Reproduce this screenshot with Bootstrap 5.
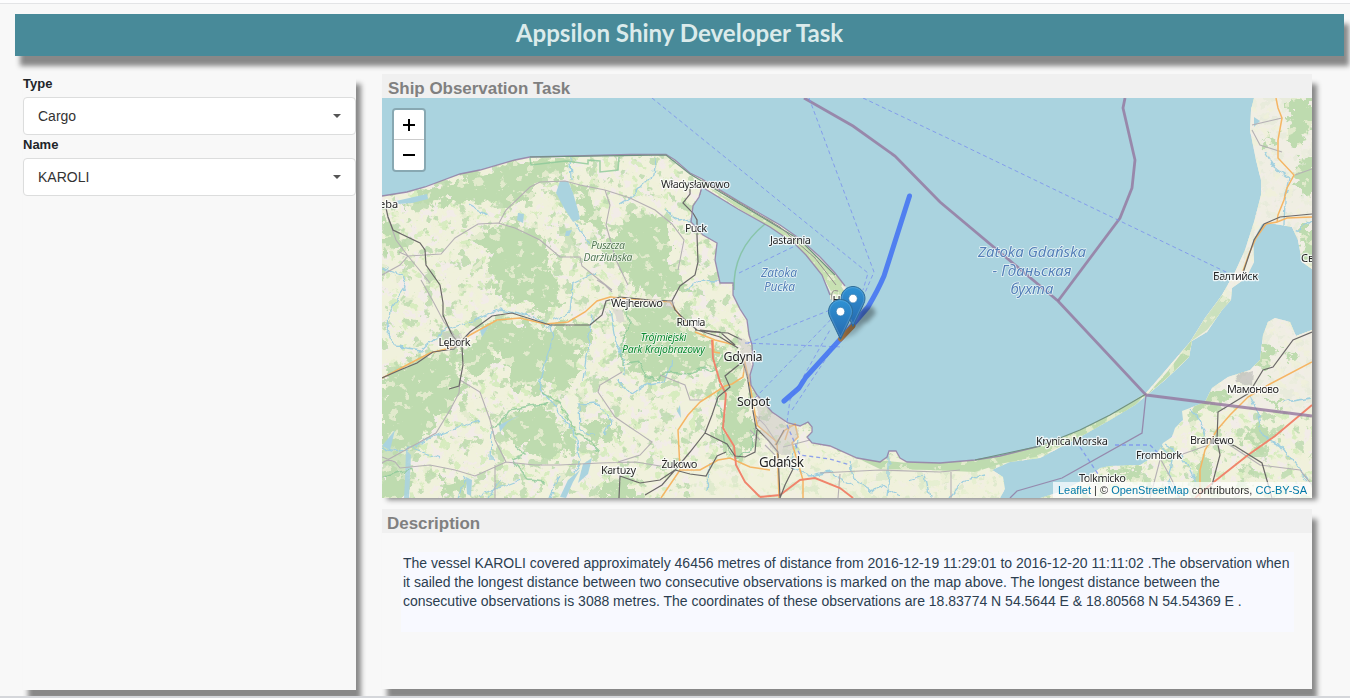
<!DOCTYPE html>
<html lang="en">
<head>
<meta charset="utf-8">
<title>Appsilon Shiny Developer Task</title>
<meta name="viewport" content="width=device-width, initial-scale=1">
<link rel="stylesheet" href="https://cdn.jsdelivr.net/npm/bootstrap@5.3.0/dist/css/bootstrap.min.css">
<style>
  body { background:#f8f8f8; font-family:"Liberation Sans",Arial,sans-serif; font-size:14px; height:698px; color:#212529; }
  .top-edge { height:4px; background:#fdfdfe; border-bottom:1px solid #e3e4e6; }
  .bottom-edge { height:2px; background:#d5d7db; z-index:5; }
  .raised { box-shadow:5px 10px 5px #888; }
  .title-bar { margin:10px 6px 0 15px; height:42px; background:#488a99; color:#dbebeb; }
  .title-bar h1 { font:700 24.1px/37px Lato,sans-serif; }
  .content-row { margin:18px 0 0 23px; gap:26px; }
  .side-panel { width:333px; height:616px; background:#f8f8f8; }
  .side-panel label { font-size:13px; line-height:20px; font-weight:700; height:23px; }
  .side-panel .form-select { height:38px; border-color:#dcdddd; border-radius:4px; padding:1px 14px 0; font-size:14px; color:#333; background-image:none; }
  .caret-mark { right:15px; top:17px; border:4px solid transparent; border-top-color:#555; border-bottom:0; }
  .right-col { width:930px; }
  .map-card { height:416px; }
  .desc-card { height:180px; margin-top:19px; background:#f8f8f8; }
  .card-title-bar { height:24px; background:#f0f0f0; color:#808080; font-weight:700; font-size:16.95px; line-height:29px; padding-left:6px; }
  .desc-card .card-title-bar { padding-left:5px; }
  .map-box { height:400px; }
  .desc-text { margin:19px 18px 0 19px; height:80px; padding:2px 2px 2px 2px; background:#f8f9ff; color:#2c3e50; font-size:14px; line-height:19px; }
  .zoom-box { left:10px; top:10px; border:2px solid rgba(0,0,0,.2); border-radius:4px; background-clip:padding-box; width:34px; }
  .zoom-box .btn { height:30px; padding:0; border:0; border-radius:2px; background:#fff; }
  .zoom-box .btn + .btn { border-top:1px solid #ccc; height:31px; border-radius:0 0 2px 2px; }
  .attribution { height:16px; background:rgba(255,255,255,.7); font-size:11px; line-height:16px; padding:0 5px; color:#333; white-space:nowrap; }
  .attribution a { color:#0078a8; }
  .lbl { font-family:"Noto Sans",sans-serif; font-size:11px; fill:#262626; text-anchor:middle; paint-order:stroke; stroke:rgba(255,255,255,.75); stroke-width:2.5px; stroke-linejoin:round; }
  .lbl-it { font-style:italic; stroke-width:1.5px; }
  .sea { fill:#5480b8; }
</style>
</head>
<body class="overflow-hidden position-relative">
<div class="top-edge"></div>
<header class="title-bar raised text-center"><h1 class="m-0">Appsilon Shiny Developer Task</h1></header>

<main class="content-row d-flex align-items-start">
  <aside class="side-panel raised d-flex flex-column">
    <label for="type">Type</label>
    <div class="position-relative"><div id="type" class="form-select bg-white d-flex align-items-center">Cargo</div><span class="caret-mark position-absolute"></span></div>
    <label for="name">Name</label>
    <div class="position-relative"><div id="name" class="form-select bg-white d-flex align-items-center">KAROLI</div><span class="caret-mark position-absolute"></span></div>
  </aside>

  <div class="right-col">
    <section class="map-card raised">
      <div class="card-title-bar">Ship Observation Task</div>
      <div class="map-box position-relative">
<svg class="d-block" width="930" height="400" viewBox="382 98 930 400">
<defs>
  <path id="westland" d="M382 196L407 192 425 187 460 174 480 170 515 160 530 157 575 156 630 154.5 666 154.5 675 160 690 173 702 179 740 202 780 225 800 239 820 257 835 273 845 286 849 298 840 303 830 299 830 292 822 275 806 255 795 244 770 227 738 209 702 187 699 197 693 206 691 222 703 235 717 243 715 260 720 283 733 283 733 295 740 309 747 320 749 335 752 345 753 365 750 375 751 385 757 395 772 412 788 423 800 426 808 423 812 427 812 432 807 437 812 443 830 446 857 458 880 462 887 457 889 451 896 451 900 458 907 462 940 463 975 460 1000 456 1040 446 1080 430 1110 415 1146 393 1190 342 1205 318 1222 295 1235 272 1245 250 1254 222 1261 195 1261 180 1256 160 1250 130 1251 110 1254 98 1312 98 1312 269 1302 262 1298 240 1292 227 1275 224 1262 224 1253 240 1254 262 1246 278 1232 288 1231 300 1222 310 1207 332 1192 341 1189 357 1178 368 1165 380 1146 396 1135 405 1110 420 1080 437 1040 458 1010 462 992 470 1003 477 1005 489 1000 498 382 498Z"/>
  <path id="eastland" d="M1040 498L1060 492 1085 479 1100 468 1110 466 1140 465 1150 459 1158 452 1163 443 1172 437 1175 428 1183 420 1182 411 1190 408 1205 402 1212 388 1228 377 1250 370 1260 360 1263 335 1268 322 1275 318 1290 322 1296 336 1312 330 1312 498Z"/>
  <clipPath id="landclip"><use href="#westland"/><use href="#eastland"/></clipPath>
  <filter id="rough" x="-5%" y="-5%" width="110%" height="110%"><feTurbulence type="fractalNoise" baseFrequency=".09" numOctaves="4" seed="4"/><feDisplacementMap in="SourceGraphic" scale="26" xChannelSelector="R" yChannelSelector="G"/></filter>
  <filter id="wiggle" x="-5%" y="-5%" width="110%" height="110%"><feTurbulence type="fractalNoise" baseFrequency=".12" numOctaves="2" seed="9"/><feDisplacementMap in="SourceGraphic" scale="7" xChannelSelector="R" yChannelSelector="G"/></filter>
  <filter id="woods" x="0" y="0" width="100%" height="100%" color-interpolation-filters="sRGB"><feTurbulence type="fractalNoise" baseFrequency=".085" numOctaves="4" seed="12"/><feColorMatrix values="0 0 0 0 .745  0 0 0 0 .859  0 0 0 0 .686  20 0 0 0 -11.9"/></filter>
  <filter id="fields" x="0" y="0" width="100%" height="100%" color-interpolation-filters="sRGB"><feTurbulence type="fractalNoise" baseFrequency=".1" numOctaves="4" seed="31"/><feColorMatrix values="0 0 0 0 .949  0 0 0 0 .925  0 0 0 0 .91  0 16 0 0 -9"/></filter>
  <filter id="glades" x="0" y="0" width="100%" height="100%" color-interpolation-filters="sRGB"><feTurbulence type="fractalNoise" baseFrequency=".095" numOctaves="4" seed="57"/><feColorMatrix values="0 0 0 0 .94  0 0 0 0 .945  0 0 0 0 .85  0 0 22 0 -13.8"/></filter>
  <filter id="meadow" x="0" y="0" width="100%" height="100%" color-interpolation-filters="sRGB"><feTurbulence type="fractalNoise" baseFrequency=".1" numOctaves="4" seed="77"/><feColorMatrix values="0 0 0 0 .82  0 0 0 0 .92  0 0 0 0 .72  0 0 18 0 -11.2"/></filter>
  <filter id="blur3" x="-50%" y="-50%" width="200%" height="200%"><feGaussianBlur stdDeviation="2.2"/></filter>
  <linearGradient id="pin" x1="0" y1="0" x2="0" y2="1"><stop offset="0" stop-color="#2f92d4"/><stop offset="1" stop-color="#2668ad"/></linearGradient>
  <g id="marker"><path d="M12.5.5C5.9.5.5 6 .5 12.6c0 2 .5 3.8 1.4 5.5L12.5 40.4 23.1 18.1c.9-1.7 1.4-3.5 1.4-5.5C24.5 6 19.1.5 12.5.5Z" fill="url(#pin)" stroke="#2e6c97"/><path d="M12.5 1.6c-6 0-10.9 5-10.9 11 0 1.8.4 3.5 1.2 5L12.5 37.8l9.7-20.2c.8-1.5 1.2-3.2 1.2-5 0-6-4.9-11-10.9-11Z" fill="none" stroke="#fff" stroke-opacity=".15"/><circle cx="12.5" cy="12.6" r="4.3" fill="#fff" stroke="#2e77b0" stroke-width=".7"/></g>
</defs>
<rect x="382" y="98" width="930" height="400" fill="#aad3df"/>
<!-- land, woodland and fields -->
<g clip-path="url(#landclip)">
  <rect x="382" y="98" width="930" height="400" fill="#f0f1dc"/>
  <rect x="382" y="98" width="930" height="400" filter="url(#fields)"/>
  <rect x="382" y="98" width="930" height="400" filter="url(#meadow)" opacity=".8"/>
  <rect x="382" y="98" width="930" height="400" filter="url(#woods)" opacity=".85"/>
  <path d="M1200 90H1320V416L1146 396 1100 350Z" fill="#f0ede5" opacity=".8"/>
  <path d="M690 470L775 445 800 450 1003 470 1003 498 690 498Z" fill="#f0f1dc" opacity=".6"/>
  <g fill="#bedbaf" filter="url(#rough)">
    <path d="M425 190L470 175 530 160 570 162 560 175 535 182 528 200 510 208 495 200 470 203 440 202 405 205Z"/>
    <path d="M570 177L590 190 608 228 600 236 580 212Z"/>
    <path d="M615 232L640 210 672 222 672 262 690 290 650 296 622 275 605 258 600 245Z"/>
    <path d="M470 240L500 224 540 232 555 255 550 275 565 290 545 315 505 298 485 275 492 255Z"/>
    <path d="M382 215L402 235 410 255 382 250Z"/>
    <path d="M470 345L500 316 545 328 580 322 598 332 578 355 570 390 540 385 545 395 510 385 500 350 480 375 462 380 462 355Z"/>
    <path d="M382 382L410 360 440 352 460 350 455 375 470 385 450 400 452 412 430 430 400 452 382 450Z"/>
    <path d="M505 418L545 402 552 420 572 432 575 450 550 462 520 445 504 435Z"/>
    <path d="M622 310L645 300 676 310 695 332 715 345 722 362 700 375 670 374 648 380 628 368 618 350 630 332Z"/>
    <path d="M722 350L742 362 740 385 752 415 754 445 735 460 720 440 722 405 716 380Z"/>
    <path d="M400 395L425 420 412 470 382 492 382 450Z" opacity=".7"/>
    <path d="M582 425L612 420 620 438 590 444Z"/>
    <path d="M608 478L634 474 632 500 602 500Z"/>
    <path d="M382 470L412 478 404 500 382 500Z"/>
    <path d="M440 478L460 476 465 492 440 496Z"/>
    <path d="M560 215L575 240 580 262 560 250Z" opacity=".7"/>
    <path d="M1290 98H1316V120L1300 145 1286 140 1290 112Z"/>
    <path d="M1298 155L1316 158V200L1303 192 1297 175Z"/>
    <path d="M1262 135L1276 136 1278 148 1266 147Z"/>
    <path d="M1300 228L1316 228V266L1301 262Z"/>
    <path d="M1190 402L1215 388 1228 398 1212 412 1195 410Z"/>
    <path d="M1262 342L1275 350 1272 372 1256 368Z"/>
    <path d="M1260 425L1278 435 1262 450 1242 440Z"/>
    <path d="M1284 350L1300 356 1290 362Z"/><path d="M1262 396L1284 404 1276 410Z"/>
    <path d="M1196 458L1210 456 1210 486 1194 488Z"/>
    <path d="M1240 462L1252 470 1244 480Z"/>
    <path d="M1105 470L1140 466 1142 485 1115 482Z"/>
  </g>
  <g fill="#bedbaf"><path d="M1146 396L1168 371 1190 342 1192 341 1189 357 1165 380Z"/><path d="M1190 342L1205 318 1222 295 1231 300 1207 330Z" opacity=".7"/><path d="M857 458L907 463 975 460 1040 446 1080 430 1110 415 1146 393 1135 406 1110 421 1080 437 1040 456 1000 464 975 472 930 470 880 469Z"/><path d="M770 227L800 241 835 275 848 298 832 293 822 275 806 255Z" fill="#c7e0b2"/><path d="M700 182L780 228 806 250 795 243 738 208Z" fill="#c7e0b2"/></g>
  <rect x="382" y="98" width="930" height="400" filter="url(#glades)" opacity=".7"/>
</g>
<!-- inland water -->
<g fill="#aad3df">
  <path d="M396 201L427 194 428 199 412 203 398 204Z"/><path d="M560 181L568 181 573 193 578 210 580 219 573 222 564 208 556 193Z"/><path d="M518 213L524 214 523 223 517 220Z"/><path d="M566 231L572 230 569 236 565 236Z"/>
  <path d="M466 477L472 480 471 496 467 494Z"/><path d="M382 446L395 430 390 450Z"/><path d="M560 497L568 480 580 470 573 482 566 498Z"/><path d="M583 464L592 458 588 474 578 483Z"/><path d="M480 330L489 326 482 337Z"/><path d="M499 425L520 415 508 422 500 432Z"/><path d="M680 405L681 418 677 411Z"/><path d="M406 450L411 455 409 498 404 498 405 480Z" opacity=".9"/><path d="M1254 117L1260 121 1254 127Z"/>
</g>
<g fill="none" stroke="#9fcfdf" stroke-width="1.3" filter="url(#wiggle)">
  <path d="M382 268L401 275 405 288 390 310 387 330 396 347 422 350 445 330 475 320 500 309 530 316 550 327 553 338 545 365 539 388 558 410 575 435 580 462 574 474"/><path d="M573 283L570 313 553 320M572 283L598 271M592 314L587 350 583 380M610 310L615 340 623 358 624 375M382 448L400 452 440 434 480 420M492 430L491 460M594 435L580 430 579 405 598 404 612 420 605 434M412 448L440 458M655 158L653 175 630 198 620 204M470 205L488 215M575 222L590 245M664 210L680 222 692 220M685 290L700 280 718 281M570 158L571 180M672 360L664 382 648 384 632 395 618 380"/>
  <path d="M849 461L855 480 872 492 880 484 900 498M889 452L889 475 887 498M798 440L790 466 810 476 830 472 853 486M910 480L925 475 930 498M950 498L965 480 985 475M710 465L707 490M1190 410L1200 420 1205 435M1162 447L1172 460 1168 480 1180 498M1165 445L1180 454 1190 470 1197 485M1250 395L1258 415 1262 435 1280 445 1308 480M1265 152L1275 168 1290 178 1285 200 1284 225M1284 402L1312 398M1296 232L1312 220M465 478L458 498M560 475L550 498M520 480L480 495M488 498L500 480"/>
</g>
<!-- park borders -->
<g fill="none" stroke="#8cc898" stroke-width="1.5" stroke-opacity=".8"><path d="M530 158L531 165 548 163 566 161 588 164 588 160 600 161 600 172 618 170 619 157"/><path d="M765 224C745 240 733 262 734 290" stroke="#7fc09c"/><path filter="url(#wiggle)" d="M624 303L630 322 622 345 622 365 640 362 648 378 658 380 666 372 690 374 700 368 712 372 725 355M542 392L560 403 575 432 590 440 600 452M548 404L535 405 510 410 500 424 490 427M515 446L525 455 512 460 528 480 545 482M382 478L400 472 412 470M722 385L716 398 722 415 724 440 735 458 752 450 754 430"/></g>
<!-- roads and railways -->
<g fill="none" stroke="#b5b0b4" stroke-width="1.1">
  <path d="M421 280L434 303 444 322 454 335M399 252L408 256 425 255 441 254 455 238 478 224 498 223 515 228 540 240 560 257 580 257 582 266 612 290M499 223L506 210 530 187 540 182 565 181 580 185 605 190 630 198 655 210 672 224 684 240 678 270M605 190L610 205 606 225 616 260 628 285M388 217L396 240 408 256 430 283M408 256L400 265 382 275M460 380L480 392 490 420 495 440 506 462 535 465 560 465 600 463 636 462 660 466M382 457L395 462 400 468 430 465 455 470 475 476 506 462M382 463L400 453 436 433 450 410 459 393M460 380L459 393M495 465L495 498M622 372L600 385 598 392 615 417 652 442 640 455 618 462M597 280L605 285 612 292M660 375L685 385 690 400 703 400M1252 125L1282 118M1252 130L1260 145 1282 152M1295 175L1312 169M1160 460L1150 498M1160 458L1172 480 1180 498M1222 440L1260 465 1300 470 1312 485M1217 442L1180 455 1165 455M820 473L880 470 940 472 960 470M840 474L838 498M951 472L951 498M783 447L810 440M755 415L765 425 775 440M760 416L755 430M765 445L775 455M750 430L760 440M702 185L700 195"/>
</g>
<g fill="none" stroke="#f5b564" stroke-width="1.5">
  <path d="M382 378L405 366 430 353 454 347 470 335 497 320 520 318 545 324 568 322 585 312 597 301 610 297 632 299 655 301 670 302 680 316 690 325"/>
  <path d="M695 332L715 340 735 345M713 340L714 352 720 353M746 355L743 377 732 384 725 386 700 402 688 415 678 430 680 470 661 498M680 470L700 470 718 460 730 458 750 467 770 470M744 359L749 380 757 425 777 442 779 498M775 445L785 430 795 424 798 437 792 443 803 480 803 498M790 425L785 440M1276 98L1278 108 1282 118 1278 140 1278 158 1294 175 1287 188 1284 200 1278 215 1277 222 1266 224 1256 238 1249 254 1243 271M1277 222L1287 218 1312 217M1312 362L1270 384 1248 397 1230 415 1217 430 1205 450 1200 470 1200 498"/>
</g>
<g fill="none" stroke="#f0846c" stroke-width="1.9"><path d="M712 340L713 358 720 382 726 394 723 428 734 446 736 465 745 482 760 497M760 497L780 495 800 480 815 478 840 488 853 498M1312 405L1275 436 1248 455 1210 485 1195 498"/></g>
<g fill="none" stroke="#6b6868" stroke-width="1.2"><path d="M386 208L388 217 393 230 420 243 425 250 426 265 440 285 443 303 443 315 452 335 462 347 463 365 459 386 449 389M382 378L400 370 417 363 433 352 454 349 470 332 492 316 512 313 550 325 590 325 602 315 606 301 620 297 650 300 672 301 675 310 683 318 697 330 720 337 738 348M672 301L680 286 695 275 698 262 697 235 697 220 693 213 683 203 690 194 690 187M695 330L712 332 728 333 742 340M742 358L747 375 751 400 756 428 768 440 778 452 780 498M741 363L725 376 730 387 718 397 712 415 705 433 727 444 735 456 745 457 755 452 757 430M705 433L690 452 675 470 662 485 645 495M675 470L690 474 706 476 717 456 726 452M675 470L660 480 640 483 620 476 619 498M700 330L720 332 735 345M776 445L784 430M780 460L793 469 785 485 780 498M1312 332L1293 340 1273 367 1263 370 1249 393 1218 412 1217 440 1220 455 1212 485M1218 440L1235 446 1262 463 1272 498M1243 273L1254 240 1264 224 1280 217 1312 214"/></g>
<g fill="#c9c5c8" opacity=".5" filter="url(#wiggle)"><path d="M1236 375L1253 370 1252 387 1238 382Z" fill="#aaa"/><path d="M738 335L751 345 751 385 744 370Z"/><path d="M755 395L772 412 798 430 790 455 777 455 758 425Z"/><path d="M442 332L460 335 464 348 448 350Z"/><path d="M660 300L675 303 672 310 662 306Z"/><path d="M613 308L622 310 625 322 617 320Z"/></g>
<!-- coast outlines -->
<g fill="none" stroke="#927da5" stroke-width="1.3" stroke-opacity=".85"><path d="M382 196L407 192 425 187 460 174 480 170 515 160 530 157 575 156 630 154.5 666 154.5 675 160 690 173 702 179 740 202 780 225 800 239 820 257 835 273 845 286M830 295L822 275 806 255 795 244 770 227 738 209 702 187 699 197 693 206 691 222 703 235 717 243 715 260 720 283 733 283 733 295 740 309 747 320 749 335 752 345 753 365 750 375 751 385 757 395 772 412 788 423 800 426 808 422 812 427 812 432 807 437 812 443 830 446 857 458 880 462 887 457 889 451 896 451 900 458 907 462 940 463 975 460 1000 456 1040 446"/><path d="M1146 395L1142 433 1062 478 1017 491 1010 498"/></g>
<path d="M530 157L666 155 690 174 800 240 835 275M975 460L1040 446 1080 430 1110 415 1146 394" fill="none" stroke="#6f9182" stroke-width="1.2"/>
<path d="M702 180L780 227 815 258 836 285M832 300Q830 288 838 291" fill="none" stroke="#938e8d"/>
<!-- sea borders and ferry lines -->
<g fill="none" stroke="#94769e" stroke-opacity=".8" stroke-width="2.8"><path d="M804 98L853 126 895 156 940 202 1058 301 1146 395"/><path d="M1125 98L1123 108 1135 160 1132 188 1120 218 1058 301"/><path d="M1146 395L1312 416"/></g>
<g fill="none" stroke="#7c93ed" stroke-opacity=".85" stroke-dasharray="4 3"><path d="M652 98L868 273 863 290M809 98L874 272 864 295M863 98L960 144 1228 273M739 273L795 246M748 343L840 306M755 398L840 310M745 343L843 347M787 422L790 400 830 330M792 410L835 345"/><path d="M1115 445L1150 445 1160 455M1080 447L1098 474M787 425L800 455 830 459 850 465" stroke-width="1.3"/></g>

<!-- place names -->
<g class="lbl">
  <text x="695.5" y="188" textLength="69">Władysławowo</text><text x="696" y="232" textLength="22">Puck</text><text x="790.5" y="244" textLength="41">Jastarnia</text><text x="637" y="307" textLength="52">Wejherowo</text><text x="691" y="326" textLength="29">Rumia</text><text x="454.5" y="346" textLength="32">Lębork</text><text x="679.5" y="468" textLength="36">Żukowo</text><text x="618.5" y="474" textLength="35">Kartuzy</text><text x="388.5" y="208">eba</text><text x="841" y="304">Hel</text>
  <text x="743" y="361" style="font-size:12.5px" textLength="39">Gdynia</text><text x="753.5" y="406" style="font-size:12.5px" textLength="33">Sopot</text><text x="781.5" y="467" style="font-size:13.5px" textLength="45">Gdańsk</text>
  <text x="1235.5" y="280" textLength="45">Балтийск</text><text x="1301" y="262" style="text-anchor:start">Св</text><text x="1253" y="393" textLength="52">Мамоново</text><text x="1072" y="445" textLength="72">Krynica Morska</text><text x="1159" y="459" textLength="46">Frombork</text><text x="1212" y="444" textLength="44">Braniewo</text><text x="1102.5" y="482" textLength="47">Tolkmicko</text>
</g>
<g class="lbl lbl-it"><g fill="#557a55" style="font-size:10.5px"><text x="608" y="249" textLength="34">Puszcza</text><text x="608" y="261" textLength="49">Darżlubska</text></g><g fill="#0b8a30" style="font-size:10.5px"><text x="663.5" y="341" textLength="46">Trójmiejski</text><text x="663.5" y="353" textLength="83">Park Krajobrazowy</text></g></g>
<g class="lbl lbl-it sea" style="font-size:12px"><text x="779" y="277" textLength="36">Zatoka</text><text x="779.5" y="291" textLength="31">Pucka</text></g>
<g class="lbl lbl-it sea" style="font-size:15px"><text x="1032" y="257" textLength="108">Zatoka Gdańska</text><text x="1032" y="276" textLength="79">- Гданьская</text><text x="1032" y="294" textLength="43">бухта</text></g>

<!-- vessel track and markers -->
<path d="M909.5 196L884 276Q878 290 868 307L840.5 339 806 377 799 388 784 401" fill="none" stroke="#4675f2" stroke-opacity=".9" stroke-width="5" stroke-linecap="round" stroke-linejoin="round"/>
<path d="M853 326L840.5 339" stroke="#a87948" stroke-width="5" stroke-linecap="round"/>
<g fill="#000" opacity=".34" filter="url(#blur3)"><path d="M853 328L861 309 872 306 876 313 868 322Z"/><path d="M841 340L848 322 860 319 863 326 855 334Z" opacity=".6"/></g>
<use href="#marker" x="840.5" y="286"/><use href="#marker" x="828" y="299"/>
</svg>
        <div class="zoom-box btn-group-vertical position-absolute">
          <button class="btn d-flex w-100 align-items-center justify-content-center" aria-label="Zoom in"><svg width="14" height="14" viewBox="0 0 14 14"><path d="M7 1v12M1 7h12" stroke="#000" stroke-width="2"/></svg></button>
          <button class="btn d-flex w-100 align-items-center justify-content-center" aria-label="Zoom out"><svg width="14" height="14" viewBox="0 0 14 14"><path d="M1 7h12" stroke="#000" stroke-width="2"/></svg></button>
        </div>
        <div class="attribution position-absolute bottom-0 end-0"><a class="text-decoration-none" href="#">Leaflet</a> | © <a class="text-decoration-none" href="#">OpenStreetMap</a> contributors, <a class="text-decoration-none" href="#">CC-BY-SA</a></div>
      </div>
    </section>

    <section class="desc-card raised d-flex flex-column">
      <div class="card-title-bar">Description</div>
      <div class="desc-text">The vessel KAROLI covered approximately 46456 metres of distance from 2016-12-19 11:29:01 to 2016-12-20 11:11:02 .The observation when it sailed the longest distance between two consecutive observations is marked on the map above. The longest distance between the consecutive observations is 3088 metres. The coordinates of these observations are 18.83774 N 54.5644 E &amp; 18.80568 N 54.54369 E .</div>
    </section>
  </div>
</main>
<div class="bottom-edge position-absolute bottom-0 start-0 w-100"></div>
<script src="https://cdn.jsdelivr.net/npm/bootstrap@5.3.0/dist/js/bootstrap.bundle.min.js"></script>
</body>
</html>
